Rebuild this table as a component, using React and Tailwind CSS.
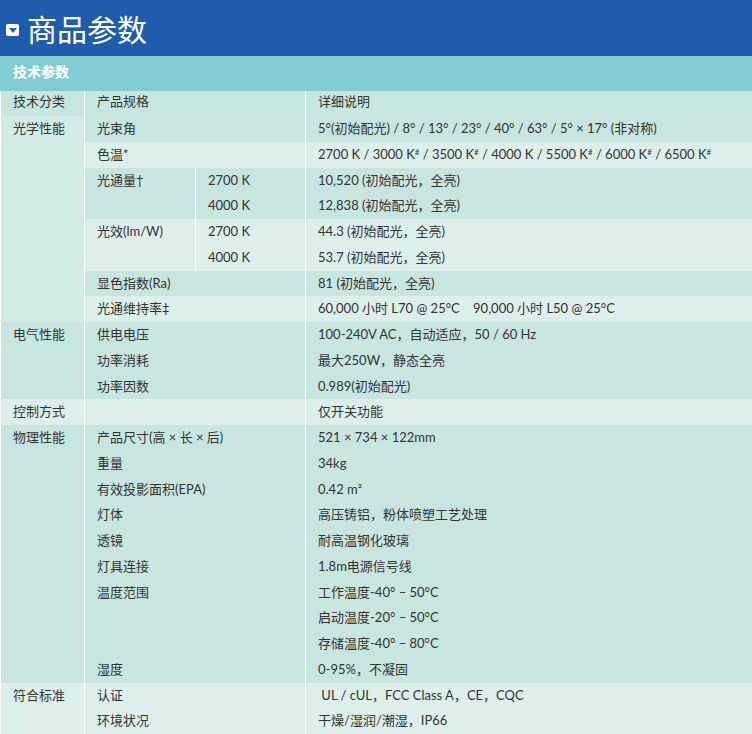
import React from "react";

const DARK = "bg-[#c9e5df]";
const LIGHT = "bg-[#dcefea]";

// 每一行: 分类 / 规格 / 子规格 / 说明 / 背景
const rows = [
  { cat: "光学性能", catSpan: 8, catBg: "bg-[#d3ebe5]", spec: "光束角", value: "5°(初始配光) / 8° / 13° / 23° / 40° / 63° / 5° × 17° (非对称)", bg: DARK },
  { spec: "色温*", value: "2700 K / 3000 K# / 3500 K# / 4000 K / 5500 K# / 6000 K# / 6500 K#", bg: LIGHT },
  { spec: "光通量†", specSpan: 2, sub: "2700 K", value: "10,520 (初始配光，全亮)", bg: DARK },
  { sub: "4000 K", value: "12,838 (初始配光，全亮)", bg: DARK },
  { spec: "光效(lm/W)", specSpan: 2, sub: "2700 K", value: "44.3 (初始配光，全亮)", bg: LIGHT },
  { sub: "4000 K", value: "53.7 (初始配光，全亮)", bg: LIGHT },
  { spec: "显色指数(Ra)", value: "81 (初始配光，全亮)", bg: DARK },
  { spec: "光通维持率‡", value: "60,000 小时 L70 @ 25°C\u00a0\u00a0\u00a0\u00a090,000 小时 L50 @ 25°C", bg: LIGHT },
  { cat: "电气性能", catSpan: 3, catBg: DARK, spec: "供电电压", value: "100-240V AC，自动适应，50 / 60 Hz", bg: DARK },
  { spec: "功率消耗", value: "最大250W，静态全亮", bg: DARK },
  { spec: "功率因数", value: "0.989(初始配光)", bg: DARK },
  { cat: "控制方式", catSpan: 1, catBg: LIGHT, spec: "", value: "仅开关功能", bg: LIGHT },
  { cat: "物理性能", catSpan: 10, catBg: DARK, spec: "产品尺寸(高 × 长 × 后)", value: "521 × 734 × 122mm", bg: DARK },
  { spec: "重量", value: "34kg", bg: DARK },
  { spec: "有效投影面积(EPA)", value: "0.42 m²", bg: DARK },
  { spec: "灯体", value: "高压铸铝，粉体喷塑工艺处理", bg: DARK },
  { spec: "透镜", value: "耐高温钢化玻璃", bg: DARK },
  { spec: "灯具连接", value: "1.8m电源信号线", bg: DARK },
  { spec: "温度范围", specSpan: 3, value: "工作温度-40° – 50°C", bg: DARK },
  { value: "启动温度-20° – 50°C", bg: DARK },
  { value: "存储温度-40° – 80°C", bg: DARK },
  { spec: "湿度", value: "0-95%，不凝固", bg: DARK },
  { cat: "符合标准", catSpan: 2, catBg: LIGHT, spec: "认证", value: "\u00a0UL / cUL，FCC Class A，CE，CQC", bg: LIGHT },
  { spec: "环境状况", value: "干燥/湿润/潮湿，IP66", bg: LIGHT },
];

const cell = "px-3 align-top leading-[25.75px] border-l border-white";
const head = "px-3 align-top leading-[21px] h-[25px] pb-[4px] border-l border-white";

// 把 "#" 画成小的上标
const renderValue = (text) =>
  text.split("#").map((part, i, arr) => (
    <React.Fragment key={i}>
      {part}
      {i < arr.length - 1 && (
        <span className="text-[8px] leading-none align-[4px]">#</span>
      )}
    </React.Fragment>
  ));

const App = () => {
  return (
    <div
      className="w-[752px] h-[734px] overflow-hidden bg-white text-[#333] text-[13px]"
      style={{ fontFamily: '"Lato", "Noto Sans CJK SC", sans-serif' }}
    >
      {/* 标题 */}
      <div className="h-[56px] bg-[#1f5dac] flex items-center pl-[6px] gap-[8px]">
        <div className="w-[13px] h-[12px] bg-white rounded-[2px] flex items-center justify-center mt-[4px]">
          <div className="w-0 h-0 border-l-[4px] border-r-[4px] border-t-[5px] border-l-transparent border-r-transparent border-t-[#1f5dac] mt-[1px]"></div>
        </div>
        <h2 className="text-white text-[30px] leading-none" style={{ fontFamily: '"Noto Sans CJK SC", sans-serif' }}>
          商品参数
        </h2>
      </div>

      {/* 技术参数 */}
      <div className="h-[35px] bg-[#82ccd1] flex items-center pl-[13px] pb-[4px] text-white font-bold text-[14px]">
        技术参数
      </div>

      <table className="w-full border-collapse table-fixed border-b-2 border-[#82ccd1]">
        <colgroup>
          <col className="w-[84px]" />
          <col className="w-[111px]" />
          <col className="w-[110px]" />
          <col />
        </colgroup>
        <thead>
          <tr className="bg-[#c6e6df]">
            <td className={head}>技术分类</td>
            <td className={head} colSpan={2}>产品规格</td>
            <td className={head}>详细说明</td>
          </tr>
        </thead>
        <tbody>
          {rows.map((r, i) => (
            <tr key={i} className="h-[25.75px]">
              {r.cat && (
                <td rowSpan={r.catSpan} className={`${cell} ${r.catBg}`}>
                  {r.cat}
                </td>
              )}
              {r.spec !== undefined && !r.sub && (
                <td
                  colSpan={2}
                  rowSpan={r.specSpan || 1}
                  className={`${cell} ${r.bg} whitespace-nowrap`}
                >
                  {r.spec}
                </td>
              )}
              {r.spec !== undefined && r.sub && (
                <td rowSpan={r.specSpan || 1} className={`${cell} ${r.bg}`}>
                  {r.spec}
                </td>
              )}
              {r.sub && <td className={`${cell} ${r.bg}`}>{r.sub}</td>}
              <td className={`${cell} ${r.bg} whitespace-nowrap`}>
                {renderValue(r.value)}
              </td>
            </tr>
          ))}
        </tbody>
      </table>
    </div>
  );
};

export default App;
